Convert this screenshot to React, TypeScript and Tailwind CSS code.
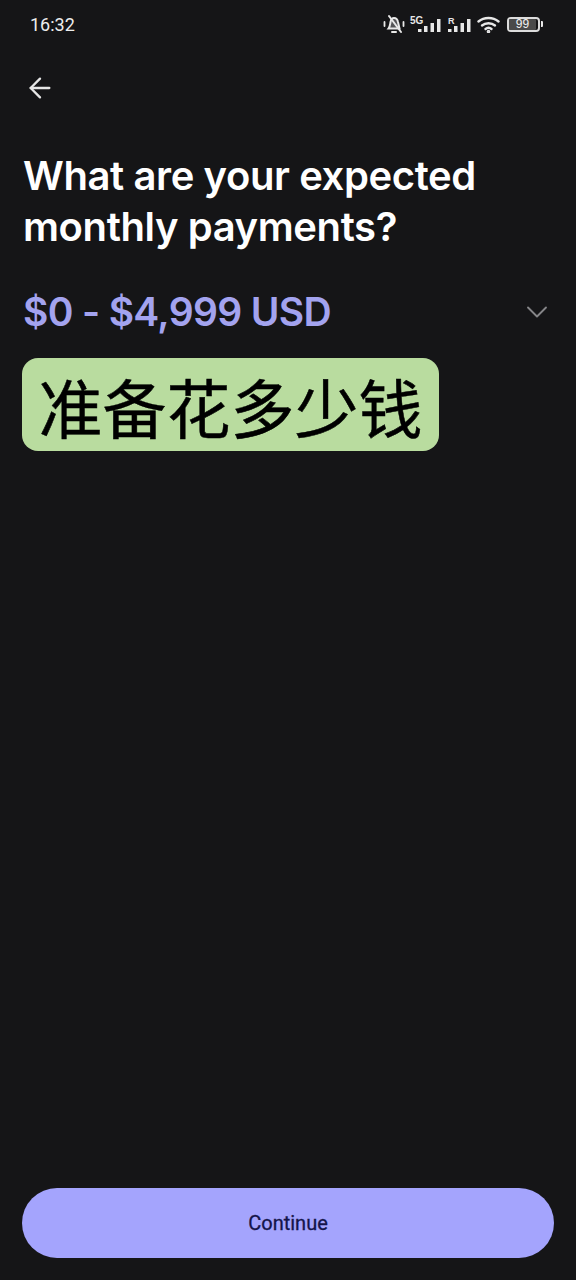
import React from 'react';
import { ArrowLeft, ChevronDown } from 'lucide-react';

function SignalBars() {
  return (
    <svg width="23" height="13" viewBox="0 0 23 13" fill="#e8e8e8" className="block">
      <rect x="0" y="10" width="3.500" height="3" />
      <rect x="6" y="7" width="3.500" height="6" />
      <rect x="12.500" y="4" width="3.500" height="9" />
      <rect x="19" y="0" width="3.500" height="13" />
    </svg>
  );
}

function StatusIcons() {
  return (
    <div className="flex items-center">
      <svg width="22" height="22" viewBox="0 0 22 22" fill="none" stroke="#e8e8e8" strokeWidth="2" strokeLinecap="round">
        <path d="M5.500 15.500c1.500-2 1.500-4 2-6.500C8 6.500 9.500 5 11 5c2 0 3.500 1.500 4 4l1.500 6.500z" fill="#e8e8e8" fillOpacity="0.3" />
        <path d="M9 19h4" />
        <path d="M6 3l12 16" />
        <path d="M1.500 9v4M20.500 9v4" strokeWidth="1.800" />
      </svg>
      <div className="relative ml-[5px] w-[31px] h-[15px]">
        <span className="absolute left-0 -top-[1px] text-[10px] leading-[10px] font-bold text-[#e8e8e8] font-['Liberation_Sans',sans-serif]">5G</span>
        <div className="absolute right-0 bottom-0"><SignalBars /></div>
      </div>
      <div className="relative ml-[7px] w-[23px] h-[15px]">
        <span className="absolute left-0 -top-[1px] text-[9px] leading-[10px] font-bold text-[#e8e8e8] font-['Liberation_Sans',sans-serif]">R</span>
        <div className="absolute right-0 bottom-0"><SignalBars /></div>
      </div>
      <svg className="ml-[6px]" width="23" height="17" viewBox="0 0 23 17" fill="none" stroke="#e8e8e8" strokeWidth="2.400" strokeLinecap="round">
        <path d="M1.500 5.500C7 .8 16 .8 21.500 5.500" />
        <path d="M5 9.500C8.500 6.500 14.500 6.500 18 9.500" />
        <path d="M8.500 13c1.700-1.400 4.300-1.400 6 0" />
        <circle cx="11.500" cy="15.500" r="0.600" fill="#e8e8e8" />
      </svg>
      <div className="ml-[7px] flex items-center">
        <div className="w-[33px] h-[15px] rounded-[4px] border-2 border-[#dcdcdc] flex">
          <div className="w-[27px] rounded-[1px] bg-[#4a4a4a] flex items-center justify-center text-[12px] leading-none text-[#f2f2f2] font-['Liberation_Sans',sans-serif]">99</div>
        </div>
        <div className="ml-[1px] w-[2px] h-[6px] rounded-r-[1px] bg-[#e8e8e8]" />
      </div>
    </div>
  );
}

export default function App() {
  return (
    <div className="w-[576px] h-[1280px] bg-[#151517] flex flex-col font-['Inter',sans-serif]">
      <div className="h-[48px] pl-[30px] pr-[33px] flex items-center justify-between">
        <span className="text-[18px] text-[#ededed] font-['Roboto',sans-serif]">16:32</span>
        <StatusIcons />
      </div>

      <div className="pl-[24px] pr-[23px] pt-[24px] flex-1 flex flex-col">
        <ArrowLeft className="w-[32px] h-[32px] text-[#e6e6e6]" strokeWidth={1.750} />

        <h1 className="mt-[46px] -ml-[1px] text-[40px] leading-[51px] font-semibold tracking-[-0.4px] text-white">
          What are your expected<br />monthly payments?
        </h1>

        <div className="mt-[30px] flex items-center justify-between h-[60px]">
          <span className="-ml-[1px] text-[39px] font-semibold tracking-[-0.65px] text-[#a3a3ef]">$0 - $4,999 USD</span>
          <ChevronDown className="w-[36px] h-[36px] text-[#858588] -mr-[2px]" strokeWidth={1.250} />
        </div>

        <div className="mt-[16px] -ml-[2px] w-[417px] h-[93px] rounded-[16px] bg-[#b9dc9f] flex items-center justify-center">
          <span className="text-[64px] leading-none font-normal text-black [-webkit-text-stroke:0.5px_black] font-['Noto_Sans_CJK_SC',sans-serif]">准备花多少钱</span>
        </div>
      </div>

      <div className="px-[22px] pb-[22px]">
        <button className="w-full h-[70px] rounded-full bg-[#a4a4fd] text-[20px] font-normal text-[#14144a] [-webkit-text-stroke:0.3px_#14144a] font-['Roboto',sans-serif]">
          Continue
        </button>
      </div>
    </div>
  );
}
